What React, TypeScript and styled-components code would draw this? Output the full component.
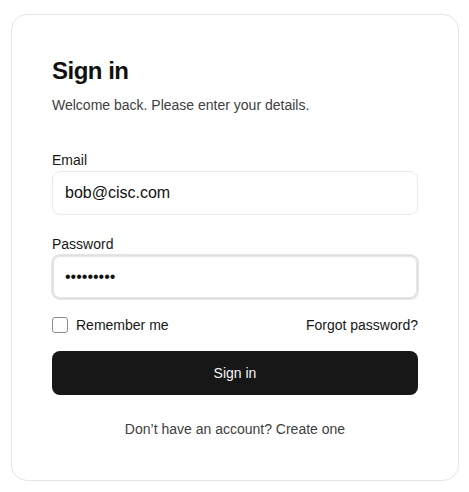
import React from "react";
import styled, { createGlobalStyle } from "styled-components";

const GlobalStyle = createGlobalStyle`
  html, body {
    margin: 0;
    padding: 0;
    background: #ffffff;
  }
  body {
    font-family: "Liberation Sans", Arial, sans-serif;
    color: #171717;
    -webkit-font-smoothing: antialiased;
  }
  * { box-sizing: border-box; }
`;

const Page = styled.div`
  padding: 14px 10px 12px 11px;
`;

const Card = styled.div`
  width: 448px;
  border: 1px solid #e5e5e5;
  border-radius: 16px;
  padding: 40px 40px 41px;
  background: #ffffff;
`;

const Header = styled.div`
  margin-bottom: 34px;
`;

const Title = styled.h1`
  margin: 0 0 8px;
  font-size: 24px;
  line-height: 32px;
  font-weight: 700;
  letter-spacing: -0.5px;
  color: #111111;
`;

const Subtitle = styled.p`
  margin: 0;
  font-size: 14px;
  line-height: 21px;
  color: #404040;
`;

const Form = styled.form`
  display: flex;
  flex-direction: column;
`;

const Field = styled.div<{ $gapAfter?: number }>`
  display: flex;
  flex-direction: column;
  margin-bottom: ${(p) => p.$gapAfter ?? 0}px;
`;

const Label = styled.label`
  font-size: 14px;
  line-height: 21px;
  color: #171717;
`;

const Input = styled.input<{ $focused?: boolean }>`
  height: 44px;
  width: 100%;
  padding: 0 12px;
  border: 1px solid ${(p) => (p.$focused ? "#e0e0e0" : "#ebebeb")};
  border-radius: 8px;
  font-family: "Liberation Sans", Arial, sans-serif;
  font-size: 16px;
  color: #111111;
  background: #ffffff;
  outline: none;
  box-shadow: ${(p) =>
    p.$focused ? "0 0 0 1px #e6e6e6, inset 0 0 0 1px #e6e6e6" : "none"};
`;

const OptionsRow = styled.div`
  display: flex;
  align-items: center;
  justify-content: space-between;
  margin-top: 16px;
  height: 20px;
`;

const CheckLabel = styled.label`
  display: flex;
  align-items: center;
  gap: 8px;
  font-size: 14px;
  line-height: 20px;
  color: #171717;
`;

const Checkbox = styled.input`
  appearance: none;
  -webkit-appearance: none;
  margin: 0;
  width: 16px;
  height: 16px;
  border: 1px solid #8c8c99;
  border-radius: 3px;
  background: #ffffff;
`;

const TextLink = styled.a`
  font-size: 14px;
  line-height: 20px;
  color: #171717;
  text-decoration: none;
`;

const SubmitButton = styled.button`
  margin-top: 16px;
  height: 44px;
  width: 100%;
  border: none;
  border-radius: 8px;
  background: #171717;
  color: #f5f5f5;
  font-family: "Liberation Sans", Arial, sans-serif;
  font-size: 14px;
`;

const Footer = styled.p`
  margin: 24px 0 0;
  text-align: center;
  font-size: 14px;
  line-height: 20px;
  color: #404040;
`;

export default function App() {
  return (
    <>
      <GlobalStyle />
      <Page>
        <Card>
          <Header>
            <Title>Sign in</Title>
            <Subtitle>Welcome back. Please enter your details.</Subtitle>
          </Header>
          <Form onSubmit={(e) => e.preventDefault()}>
            <Field $gapAfter={19}>
              <Label htmlFor="email">Email</Label>
              <Input id="email" type="email" defaultValue="bob@cisc.com" />
            </Field>
            <Field>
              <Label htmlFor="password">Password</Label>
              <Input
                id="password"
                type="password"
                defaultValue="password1"
                $focused
              />
            </Field>
            <OptionsRow>
              <CheckLabel>
                <Checkbox type="checkbox" />
                Remember me
              </CheckLabel>
              <TextLink href="#">Forgot password?</TextLink>
            </OptionsRow>
            <SubmitButton type="submit">Sign in</SubmitButton>
          </Form>
          <Footer>Don’t have an account? Create one</Footer>
        </Card>
      </Page>
    </>
  );
}
